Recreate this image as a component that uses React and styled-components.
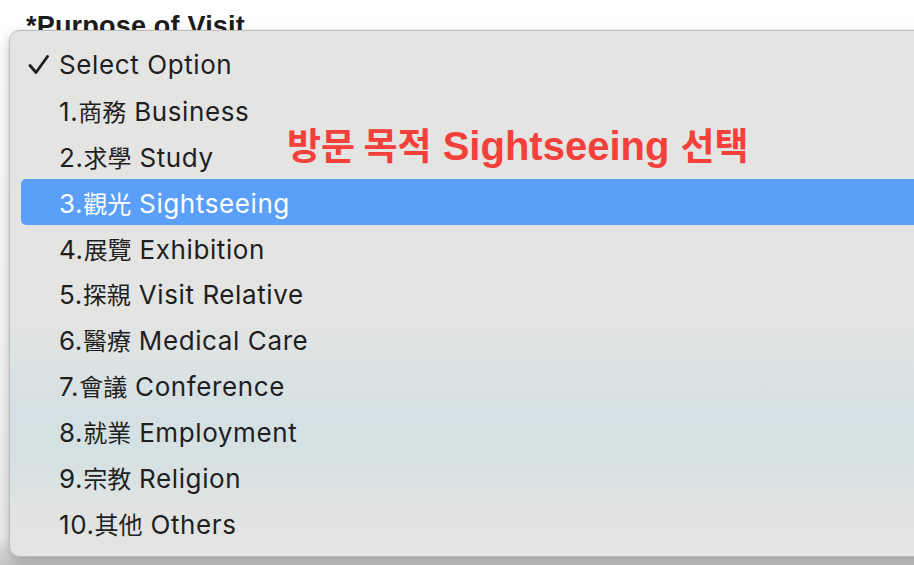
import React from "react";
import styled, { createGlobalStyle } from "styled-components";

const Global = createGlobalStyle`
  html, body { margin: 0; padding: 0; background: #ffffff; overflow: hidden; }
  body { width: 914px; height: 565px; }
`;

const Page = styled.div`
  position: relative;
  width: 914px;
  height: 565px;
  overflow: hidden;
  background: linear-gradient(180deg, #ffffff 0%, #f7f7f7 60%, #ececec 95%, #c6c6c6 100%);
  padding: 13px 0 0 26px;
  box-sizing: border-box;
`;

const Label = styled.div`
  font-family: "Liberation Sans", Arial, sans-serif;
  font-weight: 700;
  font-size: 27px;
  line-height: 27px;
  letter-spacing: 0.2px;
  color: #1c1c1c;
`;

const Menu = styled.ul`
  position: absolute;
  top: 30px;
  left: 9px;
  width: 940px;
  height: 527px;
  box-sizing: border-box;
  margin: 0;
  list-style: none;
  padding: 11px 0 10px 11px;
  border: 1px solid #bdbdbd;
  border-radius: 11px;
  background: linear-gradient(
    180deg,
    #e4e4e2 0%,
    #e4e4e2 53%,
    #dde3e3 62%,
    #d4e0e3 72%,
    #d6e1e3 82%,
    #e0e3e2 90%,
    #e4e4e2 100%
  );
  box-shadow: 0 6px 14px rgba(0, 0, 0, 0.22), 0 0 2px rgba(0, 0, 0, 0.12);
  display: flex;
  flex-direction: column;
`;

const Row = styled.li`
  display: grid;
  grid-template-columns: 38px 1fr;
  align-items: center;
  height: 46px;
  border-radius: 5px;
  background: ${(p) => (p.$active ? "#5a9ffa" : "transparent")};
  color: ${(p) => (p.$active ? "#ffffff" : "#1f1f1f")};
  font-family: "Inter", "Noto Sans CJK TC", sans-serif;
  font-size: 26px;
  letter-spacing: 0.6px;
  white-space: nowrap;
`;

const CheckCell = styled.span`
  display: flex;
  align-items: center;
  padding-left: 7px;
`;

const Cjk = styled.span`
  font-family: "Noto Sans CJK TC", sans-serif;
  font-size: 24px;
  letter-spacing: 0;
`;

const Note = styled.div`
  position: absolute;
  top: 120px;
  left: 287px;
  font-family: "Liberation Sans", "Noto Sans CJK KR", sans-serif;
  font-weight: 700;
  font-size: 40px;
  line-height: 48px;
  color: #f4403a;
  white-space: nowrap;
`;

const Kr = styled.span`
  font-family: "Noto Sans CJK KR", sans-serif;
  font-weight: 700;
  font-size: 37px;
`;

const Check = () => (
  <svg width="22" height="20" viewBox="0 0 22 20">
    <polyline
      points="2,10.5 8,17.5 19.5,1.5"
      fill="none"
      stroke="#1f1f1f"
      strokeWidth="2.8"
      strokeLinecap="round"
      strokeLinejoin="round"
    />
  </svg>
);

const items = [
  { n: "", cjk: "", en: "Select Option", checked: true },
  { n: "1.", cjk: "商務", en: "Business" },
  { n: "2.", cjk: "求學", en: "Study" },
  { n: "3.", cjk: "觀光", en: "Sightseeing", active: true },
  { n: "4.", cjk: "展覽", en: "Exhibition" },
  { n: "5.", cjk: "探親", en: "Visit Relative" },
  { n: "6.", cjk: "醫療", en: "Medical Care" },
  { n: "7.", cjk: "會議", en: "Conference" },
  { n: "8.", cjk: "就業", en: "Employment" },
  { n: "9.", cjk: "宗教", en: "Religion" },
  { n: "10.", cjk: "其他", en: "Others" },
];

export default function App() {
  return (
    <>
      <Global />
      <Page>
        <Label>*Purpose of Visit</Label>
        <Menu>
          {items.map((it, i) => (
            <Row key={i} $active={it.active}>
              <CheckCell>{it.checked ? <Check /> : null}</CheckCell>
              <span>
                {it.n}
                {it.cjk && <Cjk>{it.cjk}</Cjk>}
                {it.cjk ? " " : ""}
                {it.en}
              </span>
            </Row>
          ))}
        </Menu>
        <Note>
          <Kr>방문 목적</Kr> Sightseeing <Kr>선택</Kr>
        </Note>
      </Page>
    </>
  );
}
